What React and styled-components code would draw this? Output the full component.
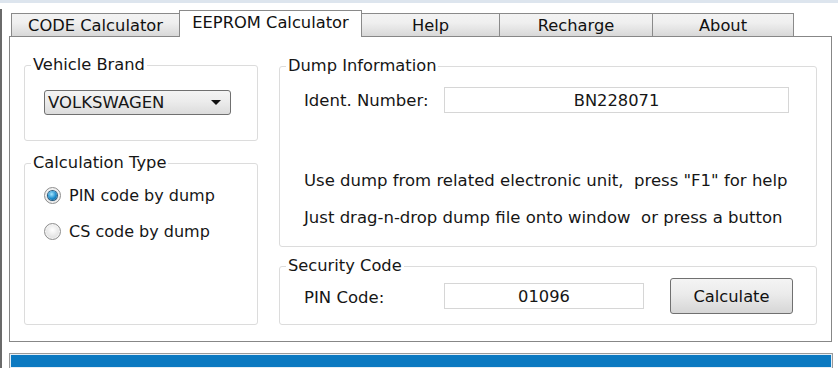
import styled, { createGlobalStyle } from "styled-components";

const Global = createGlobalStyle`
  body {
    margin: 0;
    background: #fff;
    font-family: "DejaVu Sans", Verdana, sans-serif;
    color: #161616;
  }
`;

const Window = styled.div`
  width: 838px;
  height: 368px;
  overflow: hidden;
  background: #fff;
  display: flex;
  flex-direction: column;
`;

const TopStrip = styled.div`
  flex-shrink: 0;
  height: 3px;
  background: #dde5ee;
`;

const Frame = styled.div`
  flex: 1;
  margin-top: 6px;
  border-left: 2px solid #6a6a6a;
  padding-left: 7px;
  display: flex;
  flex-direction: column;
`;

const TabRow = styled.div`
  flex-shrink: 0;
  display: flex;
  align-items: flex-end;
  height: 26px;
  margin-top: 1px;
  padding-left: 2px;
  position: relative;
  z-index: 1;
`;

const Tab = styled.div`
  box-sizing: border-box;
  flex-shrink: 0;
  width: ${(p) => p.$w}px;
  margin-left: ${(p) => (p.$first ? 0 : -1)}px;
  height: ${(p) => (p.$active ? 27 : 23)}px;
  margin-bottom: ${(p) => (p.$active ? -1 : 0)}px;
  border: 1px solid #8a8a8a;
  border-bottom: none;
  background: ${(p) =>
    p.$active ? "#fff" : "linear-gradient(#f3f3f3, #efefef 40%, #d8d8d8)"};
  position: relative;
  z-index: ${(p) => (p.$active ? 2 : 0)};
  display: flex;
  align-items: center;
  justify-content: center;
  padding-bottom: ${(p) => (p.$active ? 3 : 0)}px;
  font-size: 16.3px;
  color: #111;
`;

const Panel = styled.div`
  box-sizing: border-box;
  flex-shrink: 0;
  width: 823px;
  height: 306px;
  border: 1px solid #878787;
  background: #fff;
  display: grid;
  grid-template-columns: 234px 538px;
  column-gap: 21px;
  padding: 19px 14px 16px 14px;
`;

const Column = styled.div`
  display: flex;
  flex-direction: column;
  gap: ${(p) => p.$gap}px;
  margin-top: ${(p) => p.$top || 0}px;
`;

const Group = styled.fieldset`
  margin: 0;
  padding: 0;
  border: 1px solid #dcdcdc;
  border-radius: 3px;
  min-width: 0;
  flex: ${(p) => (p.$grow ? 1 : "none")};
`;

const Legend = styled.legend`
  margin-left: 6px;
  padding: 0 2px;
  font-size: 16.3px;
  line-height: 18px;
`;

const Body = styled.div`
  display: flex;
  flex-direction: column;
  padding: ${(p) => p.$pad};
`;

const Combo = styled.div`
  box-sizing: border-box;
  width: 187px;
  height: 25px;
  border: 1px solid #707070;
  border-radius: 3px;
  background: linear-gradient(#f4f4f4, #ececec 45%, #dcdcdc);
  display: flex;
  align-items: center;
  justify-content: space-between;
  padding: 0 9px 0 3px;
  font-size: 16.5px;
`;

const Arrow = styled.span`
  width: 0;
  height: 0;
  border-left: 5px solid transparent;
  border-right: 5px solid transparent;
  border-top: 5px solid #111;
`;

const RadioItem = styled.label`
  display: flex;
  align-items: center;
  gap: 8px;
  height: 22px;
  margin-top: ${(p) => p.$top || 0}px;
  font-size: 16px;
`;

const RadioDot = styled.span`
  box-sizing: border-box;
  width: 17px;
  height: 17px;
  border-radius: 50%;
  border: 1px solid #8e8e8e;
  background: radial-gradient(circle at 50% 40%, #ffffff, #e2e2e2 65%, #c6c6c6);
  box-shadow: inset 0 0 0 1px #f4f4f4;
  display: flex;
  align-items: center;
  justify-content: center;
  &::after {
    content: "";
    display: ${(p) => (p.$on ? "block" : "none")};
    width: 9px;
    height: 9px;
    border-radius: 50%;
    background: radial-gradient(circle at 40% 35%, #a4e6ff, #1c8ccc 55%, #0a4f7e);
    box-shadow: 0 0 0 1px #2a5d80;
  }
`;

const Row = styled.div`
  display: flex;
  align-items: center;
  margin-top: ${(p) => p.$top}px;
`;

const Label = styled.span`
  width: 140px;
  font-size: 16.5px;
  padding-top: ${(p) => p.$drop || 0}px;
`;

const Field = styled.div`
  box-sizing: border-box;
  width: ${(p) => p.$w}px;
  height: 26px;
  border: 1px solid #d6d6d6;
  background: #fff;
  display: flex;
  align-items: center;
  justify-content: center;
  font-size: 16.3px;
`;

const Hint = styled.div`
  font-size: 16.5px;
  line-height: 22px;
  margin-top: ${(p) => p.$top}px;
  white-space: nowrap;
`;

const Button = styled.button`
  box-sizing: border-box;
  width: 123px;
  height: 36px;
  margin-left: 26px;
  border: 1px solid #707070;
  border-radius: 3px;
  background: linear-gradient(#f4f4f4, #ebebeb 45%, #d6d6d6);
  font-family: inherit;
  font-size: 16.3px;
  color: #111;
  padding: 0;
`;

const StatusBar = styled.div`
  box-sizing: border-box;
  flex-shrink: 0;
  width: 824px;
  height: 15px;
  margin-top: 11px;
  border: 1px solid #9a9a9a;
  border-bottom: none;
  box-shadow: inset 0 0 0 1px #e4eef6;
  background: #0b79c1;
`;

const tabs = [
  { name: "CODE Calculator", w: 169 },
  { name: "EEPROM Calculator", w: 183, active: true },
  { name: "Help", w: 139 },
  { name: "Recharge", w: 154 },
  { name: "About", w: 142 },
];

export default function App() {
  return (
    <Window>
      <Global />
      <TopStrip />
      <Frame>
        <TabRow>
          {tabs.map((t, i) => (
            <Tab key={t.name} $w={t.w} $active={t.active} $first={i === 0}>
              {t.name}
            </Tab>
          ))}
        </TabRow>
        <Panel>
          <Column $gap={13}>
            <Group>
              <Legend>Vehicle Brand</Legend>
              <Body $pad="16px 0 25px 19px">
                <Combo>
                  VOLKSWAGEN
                  <Arrow />
                </Combo>
              </Body>
            </Group>
            <Group $grow>
              <Legend>Calculation Type</Legend>
              <Body $pad="12px 0 0 19px">
                <RadioItem>
                  <RadioDot $on />
                  PIN code by dump
                </RadioItem>
                <RadioItem $top={14}>
                  <RadioDot />
                  CS code by dump
                </RadioItem>
              </Body>
            </Group>
          </Column>
          <Column $gap={10} $top={1}>
            <Group $grow>
              <Legend>Dump Information</Legend>
              <Body $pad="0 0 0 24px">
                <Row $top={12}>
                  <Label>Ident. Number:</Label>
                  <Field $w={345}>BN228071</Field>
                </Row>
                <Hint $top={57}>Use dump from related electronic unit,&nbsp; press "F1" for help</Hint>
                <Hint $top={15}>Just drag-n-drop dump file onto window&nbsp; or press a button</Hint>
              </Body>
            </Group>
            <Group>
              <Legend>Security Code</Legend>
              <Body $pad="0 0 10px 24px">
                <Row $top={3}>
                  <Label $drop={3}>PIN Code:</Label>
                  <Field $w={200}>01096</Field>
                  <Button>Calculate</Button>
                </Row>
              </Body>
            </Group>
          </Column>
        </Panel>
        <StatusBar />
      </Frame>
    </Window>
  );
}
